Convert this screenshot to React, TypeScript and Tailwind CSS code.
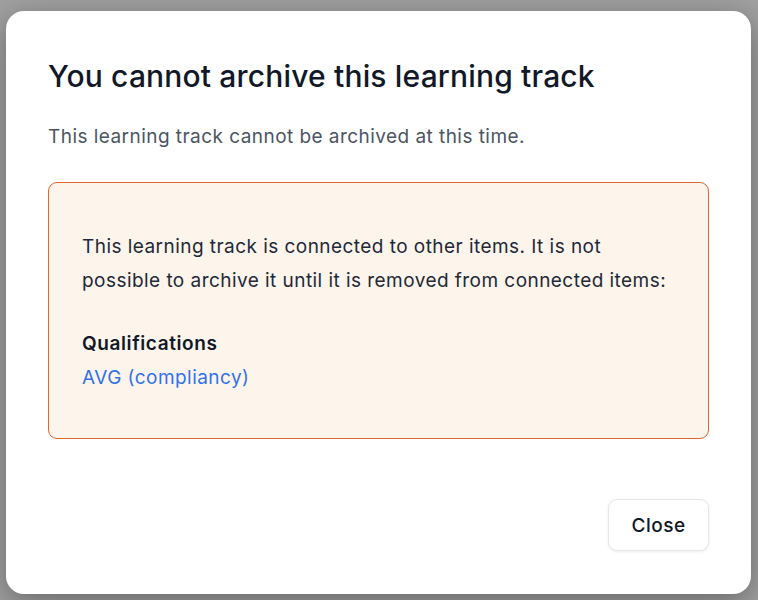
import React from "react";

export default function App() {
  return (
    <div
      className="w-[758px] h-[600px] bg-[#a0a0a0] pt-[11px] pl-[6px] overflow-hidden"
      style={{ fontFamily: "Inter, 'Noto Sans', sans-serif" }}
    >
      <div className="w-[745px] h-[583px] bg-white rounded-[18px] shadow-[0_8px_30px_rgba(0,0,0,0.35)] px-[42px] pt-[47px] pb-[43px] flex flex-col">
        <h1 className="text-[30px] leading-[36px] font-medium text-[#111827] tracking-[0.17px]">
          You cannot archive this learning track
        </h1>
        <p className="mt-[30px] text-[19px] leading-[26px] text-[#4b5563] tracking-[0.45px]">
          This learning track cannot be archived at this time.
        </p>
        <div className="mt-[32px] h-[257px] rounded-[9px] border border-[#e0682e] bg-[#fdf5ec] pl-[33px] pr-[20px] pt-[47px]">
          <p className="text-[19px] leading-[34px] text-[#1f2937] tracking-[0.45px] whitespace-nowrap">
            This learning track is connected to other items. It is not
            <br />
            possible to archive it until it is removed from connected items:
          </p>
          <div className="mt-[29px] text-[19px] leading-[34px] font-semibold text-[#111827] tracking-[0.6px]">
            Qualifications
          </div>
          <div className="text-[19px] leading-[34px] text-[#3272e8] tracking-[0.45px]">AVG (compliancy)</div>
        </div>
        <div className="mt-auto flex justify-end">
          <button className="w-[101px] h-[52px] rounded-[9px] border border-[#e5e7eb] bg-white shadow-[0_1px_3px_rgba(0,0,0,0.08)] text-[19px] leading-[26px] font-medium text-[#111827] tracking-[0.5px] pt-[2px]">
            Close
          </button>
        </div>
      </div>
    </div>
  );
}
